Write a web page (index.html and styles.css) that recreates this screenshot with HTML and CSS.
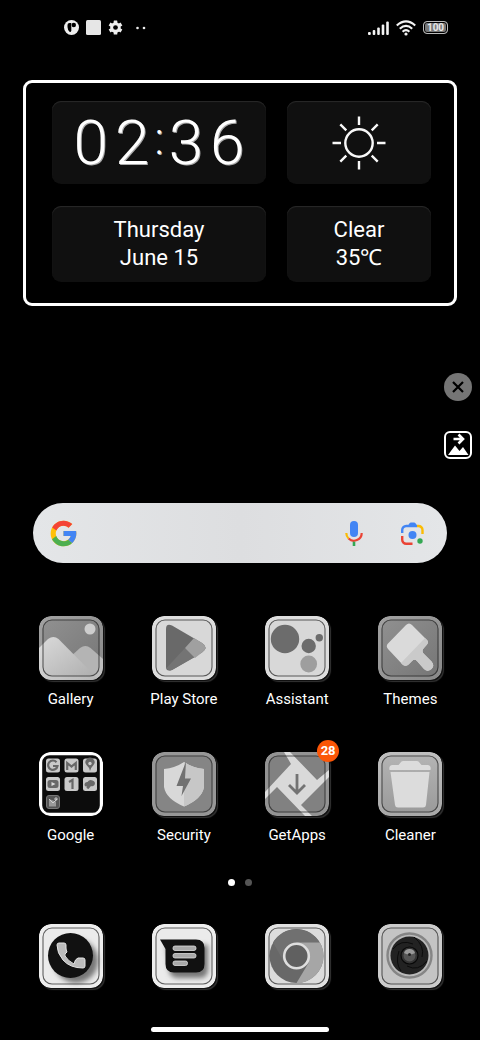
FILE: index.html
```html
<!DOCTYPE html>
<html lang="en">
  <head>
    <meta charset="UTF-8" />
    <meta name="viewport" content="width=device-width, initial-scale=1.0" />
    <title>Home screen</title>
    <link rel="stylesheet" href="styles.css">
  </head>
  <body>
    <header class="status-bar">
      <div class="status-left">
        <svg width="15" height="15" viewBox="0 0 15 15">
          <circle cx="7.5" cy="7.5" r="7.5" fill="#eee" />
          <path d="M3.500 5Q3.500 3 5.500 3H7.300v7.500q0 1.500-1.500 1.500Q3.500 10 3.500 7z" fill="#000" />
          <circle cx="9.800" cy="5" r="2.200" fill="#000" />
        </svg>
        <svg width="15" height="15" viewBox="0 0 15 15"><rect width="15" height="15" rx="1.500" fill="#e6e6e6" /></svg>
        <svg width="15" height="15" viewBox="0 0 14 14">
          <g fill="#eee">
            <rect x="5.300" y="0.500" width="3.400" height="13" rx="0.500" />
            <rect x="5.300" y="0.500" width="3.400" height="13" rx="0.500" transform="rotate(60 7 7)" />
            <rect x="5.300" y="0.500" width="3.400" height="13" rx="0.500" transform="rotate(120 7 7)" />
            <circle cx="7" cy="7" r="4.900" />
          </g>
          <circle cx="7" cy="7" r="2.200" fill="#000" />
        </svg>
        <svg class="more-dots" width="10" height="4" viewBox="0 0 10 4">
          <circle cx="1.500" cy="2" r="1.300" fill="#eee" /><circle cx="8" cy="2" r="1.300" fill="#eee" />
        </svg>
      </div>
      <div class="status-right">
        <svg width="21" height="14" viewBox="0 0 21 14" fill="#f4f4f4">
          <rect x="0" y="11" width="2.800" height="3" rx="1" />
          <rect x="4.700" y="9" width="2.600" height="5" rx="1" />
          <rect x="9.200" y="6.500" width="2.600" height="7.500" rx="1" />
          <rect x="13.700" y="3.500" width="2.600" height="10.500" rx="1" />
          <rect x="18.200" y="0.500" width="2.600" height="13.500" rx="1" />
        </svg>
        <svg width="20" height="16" viewBox="0 0 20 16" fill="none" stroke="#f4f4f4" stroke-width="2.200">
          <path d="M.8 5.500Q10-2.700 19.200 5.500M3.800 8.700Q10 3.200 16.200 8.700M6.600 11.700Q10 8.500 13.400 11.700" />
          <circle cx="10" cy="14" r="1.600" fill="#f4f4f4" stroke="none" />
        </svg>
        <span class="battery">100</span>
      </div>
    </header>

    <main>
      <section class="widget">
        <div class="panel">
          <time class="clock"><span class="digits"><span>0</span><span>2</span></span><span class="colon">:</span><span class="digits"><span>3</span><span>6</span></span></time>
        </div>
        <div class="panel">
          <svg width="54" height="54" viewBox="0 0 54 54" fill="none" stroke="#f8f8f8" stroke-width="2.400">
            <circle cx="27" cy="27" r="13.700" />
            <path d="M27 .5v8.500M27 45v8.500M.5 27H9M45 27h8.500M8.300 8.300l6 6M39.700 39.700l6 6M8.300 45.700l6-6M39.700 14.300l6-6" />
          </svg>
        </div>
        <div class="panel"><p>Thursday</p><p>June 15</p></div>
        <div class="panel"><p>Clear</p><p>35℃</p></div>
      </section>

      <div class="tools">
        <button class="close-button" aria-label="Close">
          <svg width="12" height="12" viewBox="0 0 12 12"><path d="M1 1l10 10M11 1L1 11" stroke="#000" stroke-width="2.200" /></svg>
        </button>
        <button class="wallpaper-button" aria-label="Change wallpaper">
          <svg width="24" height="24" viewBox="0 0 24 24">
            <path d="M2 22l7-9.500 4.500 5.500 3.500-4 5.500 8z" fill="#fff" />
            <path d="M7.500 6h9M12.500 1.500L17 6l-4.500 4.500" fill="none" stroke="#fff" stroke-width="2.600" />
          </svg>
        </button>
      </div>

      <form class="search">
        <svg width="27" height="27" viewBox="3 3 42 42" aria-hidden="true">
          <path fill="#ffc107" d="M43.611 20.083H42V20H24v8h11.303C33.654 32.657 29.223 36 24 36c-6.627 0-12-5.373-12-12s5.373-12 12-12c3.059 0 5.842 1.154 7.961 3.039l5.657-5.657C34.046 6.053 29.268 4 24 4 12.955 4 4 12.955 4 24s8.955 20 20 20 20-8.955 20-20c0-1.341-.138-2.650-.389-3.917z" />
          <path fill="#f44336" d="M6.306 14.691l6.571 4.819C14.655 15.108 18.961 12 24 12c3.059 0 5.842 1.154 7.961 3.039l5.657-5.657C34.046 6.053 29.268 4 24 4 16.318 4 9.656 8.337 6.306 14.691z" />
          <path fill="#4caf50" d="M24 44c5.166 0 9.860-1.977 13.409-5.192l-6.190-5.238C29.211 35.091 26.715 36 24 36c-5.202 0-9.619-3.317-11.283-7.946l-6.522 5.025C9.505 39.556 16.227 44 24 44z" />
          <path fill="#4285f4" d="M43.611 20.083H42V20H24v8h11.303a12.040 12.040 0 0 1-4.087 5.571l6.193 5.237C36.971 39.205 44 34 44 24c0-1.341-.138-2.650-.389-3.917z" />
        </svg>
        <input class="search-input" type="text" aria-label="Search" />
        <button class="search-button" type="button" aria-label="Voice search">
          <svg width="18" height="25" viewBox="0 0 18 25" fill="none" stroke-width="2.200">
            <rect x="5" y="0" width="8" height="16" rx="4" fill="#4285f4" />
            <path d="M1.300 12A7.700 7.700 0 0 0 3.600 17.500" stroke="#fbbc04" />
            <path d="M3.600 17.500A7.700 7.700 0 0 0 16.700 12" stroke="#ea4335" />
            <path d="M9 20.700V25" stroke="#34a853" stroke-width="2.600" />
          </svg>
        </button>
        <button class="search-button" type="button" aria-label="Lens">
          <svg width="23" height="23" viewBox="0 0 23 23" fill="none" stroke-width="2.400">
            <path d="M1.200 11V8A4 4 0 0 1 5.200 4H16" stroke="#4285f4" />
            <path d="M6.500 4.500l2-3.200Q9 .5 10 .5h3q1 0 1.500.8l2 3.200z" fill="#4285f4" />
            <path d="M16 4h1a4 4 0 0 1 4.500 4v4" stroke="#fbbc04" />
            <path d="M1.200 14v3.700a4 4 0 0 0 4 4H11.500" stroke="#ea4335" />
            <circle cx="11.500" cy="13" r="4" fill="#4285f4" />
            <circle cx="19" cy="19" r="2.700" fill="#34a853" />
          </svg>
        </button>
      </form>

      <nav class="apps">
        <a class="app" href="#gallery">
          <svg class="icon" viewBox="0 0 64 64">
            <defs>
              <linearGradient id="mid" x1="0" y1="0" x2="1" y2="1"><stop offset="0" stop-color="#929292" /><stop offset="1" stop-color="#747474" /></linearGradient>
              <linearGradient id="hill" x1="0" y1="0" x2="1" y2="1"><stop offset="0" stop-color="#dadada" /><stop offset="1" stop-color="#ababab" /></linearGradient>
              <linearGradient id="soft" x1="0" y1="0" x2="0" y2="1"><stop offset="0" stop-color="#b5b5b5" /><stop offset="1" stop-color="#999" /></linearGradient>
              <filter id="blur" x="-50%" y="-50%" width="200%" height="200%"><feGaussianBlur stdDeviation="2.500" /></filter>
              <clipPath id="tile"><rect width="64" height="64" rx="12" /></clipPath>
              <g id="ring" fill="none">
                <rect x="1.800" y="1.800" width="60.400" height="60.400" rx="10.500" stroke="#fff" stroke-opacity=".15" stroke-width="3.600" />
                <rect x="4" y="4" width="56" height="56" rx="9" stroke="#222" stroke-opacity=".7" stroke-width="1.100" />
              </g>
            </defs>
            <g clip-path="url(#tile)">
              <rect width="64" height="64" fill="url(#mid)" />
              <path d="M30 42l11-10q5.500-4 10.500 0L64 43v21H30z" fill="#b4b4b4" />
              <path d="M0 32l9-9q5.500-4 10.500 0L60 64H0z" fill="url(#hill)" />
              <circle cx="51" cy="13" r="5.500" fill="#cdcdcd" />
              <use href="#ring" />
            </g>
          </svg>
          <span>Gallery</span>
        </a>
        <a class="app" href="#play">
          <svg class="icon" viewBox="0 0 64 64">
            <rect width="64" height="64" rx="12" fill="#d8d8d8" />
            <path d="M14 13q0-6 6-3.500L50 27q7 4.500 0 9.500L20 54q-6 2-6-3z" fill="#696969" />
            <path d="M33 32L14.500 52q1.500 3.500 5.500 2l23-13z" fill="#747474" />
            <path d="M42 22L33 32l10 10 7-5.500q7-5 0-9.500z" fill="#a0a0a0" />
            <use href="#ring" />
          </svg>
          <span>Play Store</span>
        </a>
        <a class="app" href="#assistant">
          <svg class="icon" viewBox="0 0 64 64">
            <rect width="64" height="64" rx="12" fill="#d8d8d8" />
            <g fill="#6c6c6c"><circle cx="20" cy="23" r="14.200" /><circle cx="43.700" cy="30" r="7.200" /><circle cx="54.300" cy="21.700" r="3.700" /></g>
            <circle cx="43.700" cy="48" r="8.400" fill="#9e9e9e" />
            <use href="#ring" />
          </svg>
          <span>Assistant</span>
        </a>
        <a class="app" href="#themes">
          <svg class="icon" viewBox="0 0 64 64">
            <rect width="64" height="64" rx="12" fill="url(#mid)" />
            <path d="M28 9q3-3 6 0l15 15q2 2 0 4.500l-3.500 4q-2 2.500 0 5l8 8q3.500 4 0 7.500-4 3.500-7.500 0l-7-8q-2.500-2.500-5 0l-3.500 3.500q-3 2.500-6 0L10 33q-2.500-3 0-5.500z" fill="#dadada" />
            <path d="M47 22l2 2q2 2 0 4.500l-3.500 4q-2 2.500 0 5l8 8q3.500 4 0 7.500-4 3.500-7.500 0l-7-8q-2.500-2.500-5 0l-3.500 3.500q-3 2.500-6 0l-1.500-1.500z" fill="#cacaca" />
            <use href="#ring" />
          </svg>
          <span>Themes</span>
        </a>

        <a class="app" href="#google">
          <svg class="icon flat" viewBox="0 0 64 64">
            <rect x="1.600" y="1.600" width="60.800" height="60.800" rx="9" fill="#0c0c0c" stroke="#fff" stroke-width="3.200" />
            <g fill="#c9c9c9">
              <rect x="7" y="6.500" width="14" height="14" rx="2.500" /><rect x="25.500" y="6.500" width="14" height="14" rx="2.500" /><rect x="44" y="6.500" width="14" height="14" rx="2.500" />
              <rect x="7" y="25" width="14" height="14" rx="2.500" /><rect x="25.500" y="25" width="14" height="14" rx="2.500" /><rect x="44" y="25" width="14" height="14" rx="2.500" />
            </g>
            <rect x="7.500" y="43.500" width="13" height="13" rx="2.500" fill="#555" stroke="#777" />
            <g fill="none" stroke="#686868" stroke-width="2.200">
              <path d="M17.500 10.200A4.700 4.700 0 1 0 18.500 14H14" />
              <path d="M28.200 18v-7l4.300 3.600 4.300-3.600v7" />
              <path d="M30 30l3.500-2v9" />
            </g>
            <path d="M51 19q-1-4-3.500-6a4.500 4.500 0 1 1 7 0Q52 15.500 51 19z" fill="#686868" /><circle cx="51" cy="11.500" r="1.700" fill="#ccc" />
            <rect x="8.500" y="28" width="11" height="8" rx="2.500" fill="#686868" /><path d="M12.500 30l4 2-4 2z" fill="#ddd" />
            <path d="M45.500 33q0-3 3-3 2-3 5-1.500 3.500 1 2 4.500-2 2-3.500 1L49.500 37q-3-1-1.500-2.500-2.500 0-2.500-1.500z" fill="#686868" />
            <path d="M10 47l7 2.500v5H10z" fill="#999" /><path d="M10 47l4 4 4-4M17 45v4M15 47h4" fill="none" stroke="#ddd" stroke-width=".8" />
          </svg>
          <span>Google</span>
        </a>
        <a class="app" href="#security">
          <svg class="icon" viewBox="0 0 64 64">
            <rect width="64" height="64" rx="12" fill="#858585" />
            <path d="M32 10q9 6 20 7v18q-2 12-20 19.500Q14 47 12 35V17q11-1 20-7z" fill="#d8d8d8" />
            <path d="M32 10q9 6 20 7v18q-2 12-20 19.500z" fill="#c7c7c7" />
            <path d="M34 9.500L24.500 34H31l-1.500 10L39 26.500h-6z" fill="#717171" />
            <use href="#ring" />
          </svg>
          <span>Security</span>
        </a>
        <a class="app" href="#getapps">
          <span class="badge">28</span>
          <svg class="icon" viewBox="0 0 64 64">
            <g clip-path="url(#tile)">
              <rect width="64" height="64" fill="#818181" />
              <path d="M19 0h6l27 28 12-10v7L36 53l11 11h-7L12 35 0 47v-7l26-28z" fill="#d9d9d9" />
              <path d="M32 22v18M24 33l8 8 8-8" fill="none" stroke="#737373" stroke-width="2.800" />
              <use href="#ring" />
            </g>
          </svg>
          <span>GetApps</span>
        </a>
        <a class="app" href="#cleaner">
          <svg class="icon" viewBox="0 0 64 64">
            <rect width="64" height="64" rx="12" fill="url(#soft)" />
            <path d="M11.500 18q-1-4.500 3-5h6l3-3.500q.5-.5 1.500-.5h14q1 0 1.500.5l3 3.500h6q4 .5 3 5z" fill="#dcdcdc" />
            <path d="M12.500 20h39L48 53q-.3 2.500-3 2.500H20q-2.700 0-3-2.500z" fill="#dcdcdc" />
            <use href="#ring" />
          </svg>
          <span>Cleaner</span>
        </a>
      </nav>

      <div class="pager">
        <button class="dot active" aria-label="Page 1"></button>
        <button class="dot" aria-label="Page 2"></button>
      </div>
    </main>

    <nav class="dock">
      <a class="app" href="#phone" aria-label="Phone">
        <svg class="icon" viewBox="0 0 64 64">
          <g clip-path="url(#tile)">
            <rect width="64" height="64" fill="#ebebeb" />
            <circle cx="37" cy="37" r="22" fill="#777" filter="url(#blur)" />
            <circle cx="31.500" cy="31.500" r="22.500" fill="#111" />
            <path d="M18 21q0-2 2-2h5q2 0 2 2v3q0 2 1 4-3 2-2 4 3 5 9 8 1-5 4-6h5q2 0 2 2v6q0 2-2 2-13 0-20-8-6-7-6-15z" fill="#bcbcbc" stroke="#e4e4e4" stroke-linejoin="round" />
            <use href="#ring" />
          </g>
        </svg>
      </a>
      <a class="app" href="#messages" aria-label="Messages">
        <svg class="icon" viewBox="0 0 64 64">
          <g clip-path="url(#tile)">
            <rect width="64" height="64" fill="#ebebeb" />
            <path d="M14 21h42v24q0 9-8 9H26q-8 0-9-8z" fill="#777" filter="url(#blur)" />
            <path d="M8 15.500h36q8.500 0 8.500 8.500v16q0 8.500-8.500 8.500H22q-8.500 0-8.500-8.500V25z" fill="#111" />
            <g fill="#aaa" stroke="#ddd" stroke-width=".8"><rect x="21" y="22" width="23" height="4.500" rx="2" /><rect x="21" y="29.500" width="23" height="4.500" rx="2" /><rect x="21" y="37" width="14.500" height="4.500" rx="2" /></g>
            <use href="#ring" />
          </g>
        </svg>
      </a>
      <a class="app" href="#chrome" aria-label="Chrome">
        <svg class="icon" viewBox="0 0 64 64">
          <rect width="64" height="64" rx="12" fill="#dcdcdc" />
          <circle cx="31.500" cy="32" r="27" fill="#686868" />
          <path d="M8 18.500a27 27 0 0 1 46.500 0H31.500L19 38z" fill="#707070" />
          <path d="M31.500 18.500h23.400A27 27 0 0 1 31.500 59l12-20z" fill="#a6a6a6" />
          <circle cx="31.500" cy="32" r="12.300" fill="#606060" stroke="#dedede" stroke-width="2.600" />
          <use href="#ring" />
        </svg>
      </a>
      <a class="app" href="#camera" aria-label="Camera">
        <svg class="icon" viewBox="0 0 64 64">
          <rect width="64" height="64" rx="12" fill="#c4c4c4" />
          <circle cx="31.500" cy="31.500" r="22" fill="#bbb" stroke="#858585" stroke-width="2.400" />
          <circle cx="31.500" cy="31.500" r="19" fill="#222" />
          <path d="M15 25q8-10 20-5M36 13q11 9 8 20M49 37q-9 11-20 5M23 47q-6-8-2-20" fill="none" stroke="#0b0b0b" />
          <circle cx="31.500" cy="31.500" r="8.500" fill="#333" stroke="#080808" stroke-width="1.200" />
          <circle cx="31.500" cy="31.500" r="6" fill="#555" />
          <path d="M26 29q1-4 5.500-4t5.500 4q-5.500 3-11 0z" fill="#999" />
          <circle cx="31.500" cy="30.500" r="1.500" fill="#222" />
          <use href="#ring" />
        </svg>
      </a>
    </nav>

    <footer class="home-bar"></footer>
  </body>
</html>
```
FILE: styles.css
```css
* {
  box-sizing: border-box;
  margin: 0;
}
body {
  display: flex;
  flex-direction: column;
  min-height: 100vh;
  background: #000;
  color: #fff;
  font-family: Roboto, sans-serif;
}
button {
  padding: 0;
  border: 0;
  background: none;
}
svg {
  display: block;
}
.status-bar {
  display: flex;
  align-items: center;
  justify-content: space-between;
  height: 55px;
  padding: 0 32px 0 64px;
}
.status-left,
.status-right {
  display: flex;
  align-items: center;
  gap: 7px;
}
.more-dots {
  margin-left: 6px;
}
.battery {
  width: 25px;
  border: 1px solid #bbb;
  border-radius: 4px;
  background: #777;
  box-shadow: inset 0 0 0 1px #000;
  color: #e8e8e8;
  font-size: 10px;
  font-weight: 700;
  line-height: 11px;
  text-align: center;
}
.widget {
  display: grid;
  grid-template-columns: 214fr 144fr;
  grid-template-rows: 83px 76px;
  gap: 22px 21px;
  margin: 25px 23px 0;
  padding: 18px 23px 21px 26px;
  border: 3px solid #fff;
  border-radius: 9px;
}
.panel {
  display: flex;
  flex-direction: column;
  align-items: center;
  justify-content: center;
  border-radius: 9px;
  background: #101010;
  box-shadow: inset 0 1px 1px #2a2a2a;
  font-size: 22px;
  line-height: 28px;
}
.clock {
  display: flex;
  align-items: center;
  gap: 5px;
  font-size: 62px;
  font-weight: 300;
  line-height: 80px;
  text-shadow: 1px 1px 0 #aaa;
}
.digits {
  display: flex;
  gap: 7px;
}
.colon {
  padding-bottom: 8px;
  font-size: 44px;
  line-height: 60px;
}
.tools {
  display: flex;
  flex-direction: column;
  align-items: flex-end;
  gap: 30px;
  padding: 67px 8px 44px;
}
.close-button,
.wallpaper-button {
  display: grid;
  place-items: center;
  width: 28px;
  height: 28px;
}
.close-button {
  border-radius: 50%;
  background: #757575;
}
.wallpaper-button {
  border: 2px solid #fff;
  border-radius: 6px;
}
.search {
  display: flex;
  align-items: center;
  height: 60px;
  margin: 0 33px;
  padding: 0 23px 0 17px;
  border-radius: 30px;
  background: linear-gradient(90deg, #e4e6e8, #dddee0 50%, #e4e6e8);
}
.search-input {
  flex: 1;
  min-width: 0;
  height: 40px;
  border: 0;
  outline: 0;
  background: none;
  font: inherit;
}
.search-button {
  margin-left: 38px;
}
.apps,
.dock {
  display: grid;
  grid-template-columns: repeat(4, 1fr);
  padding: 0 13px 0 14px;
}
.apps {
  row-gap: 43px;
  margin-top: 53px;
}
.app {
  position: relative;
  display: flex;
  flex-direction: column;
  align-items: center;
  gap: 9px;
  color: #fff;
  font-size: 15px;
  line-height: 20px;
  text-decoration: none;
}
.icon {
  width: 64px;
  height: 64px;
  border-radius: 12px;
  box-shadow: 1px 1px 0 #111, 2px 2px 1px #333;
}
.icon.flat {
  box-shadow: none;
}
.badge {
  position: absolute;
  top: -12px;
  left: calc(50% + 20px);
  width: 22px;
  border-radius: 50%;
  background: #fb5607;
  font-size: 13px;
  font-weight: 700;
  line-height: 22px;
  text-align: center;
}
.pager {
  display: flex;
  justify-content: center;
  gap: 10px;
  margin-top: 34px;
}
.dot {
  width: 7px;
  height: 7px;
  border-radius: 50%;
  background: #555;
}
.dot.active {
  background: #fff;
}
.dock {
  margin-top: 38px;
}
.home-bar {
  width: 37%;
  height: 5px;
  margin: auto auto 8px;
  border-radius: 3px;
  background: #fff;
}
```
